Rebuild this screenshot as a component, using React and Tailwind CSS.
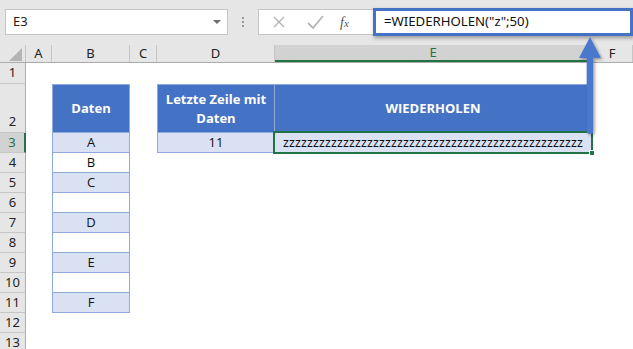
import React from 'react';

const cols = [
  { key: 'A', w: 'w-[26px]' },
  { key: 'B', w: 'w-[78px]' },
  { key: 'C', w: 'w-[27px]' },
  { key: 'D', w: 'w-[118px]' },
  { key: 'E', w: 'w-[317px]' },
  { key: 'F', w: 'flex-1' },
];

const daten = ['A', 'B', 'C', '', 'D', '', 'E', '', 'F'];

const rowHeights = {
  1: 'h-[21px]',
  2: 'h-[49px]',
};

const cellFont = { fontFamily: '"Open Sans", "Noto Sans", sans-serif' };
const uiFont = { fontFamily: '"Noto Sans", "Open Sans", sans-serif' };

const FormulaArrow = () => (
  <svg className="absolute left-[576px] top-[34px] pointer-events-none" width="32" height="108" viewBox="0 0 32 108">
    <defs>
      <filter id="sh" x="-50%" y="-20%" width="200%" height="140%">
        <feDropShadow dx="1.5" dy="1.5" stdDeviation="1.5" floodColor="#000" floodOpacity="0.35" />
      </filter>
    </defs>
    <g filter="url(#sh)">
      <path d="M14 3 L25 24 L17.3 24 L17.3 97 Q17.3 100 14 100 Q10.7 100 10.7 97 L10.7 24 L3 24 Z" fill="#4a78cc" />
    </g>
  </svg>
);

const Toolbar = () => (
  <div className="h-[45px] bg-[#e6e6e6] flex items-start pt-[9px] pl-[5px]" style={uiFont}>
    <div className="w-[223px] h-[26px] bg-white border border-[#c6c6c6] flex items-center justify-between pl-[7px] pr-[6px]">
      <span className="text-[13px] text-[#222]">E3</span>
      <span className="w-0 h-0 border-l-[4px] border-r-[4px] border-t-[4px] border-l-transparent border-r-transparent border-t-[#6d6d6d]" />
    </div>
    <div className="w-[30px] h-[26px] flex flex-col items-center justify-center gap-[2px]">
      <span className="w-[2px] h-[2px] bg-[#9a9a9a]" />
      <span className="w-[2px] h-[2px] bg-[#9a9a9a]" />
      <span className="w-[2px] h-[2px] bg-[#9a9a9a]" />
    </div>
    <div className="w-[115px] h-[26px] bg-white border border-[#c6c6c6] border-r-0 flex items-center">
      <svg width="36" height="26" viewBox="0 0 36 26" className="ml-[2px]">
        <path d="M13 8 L23 18 M23 8 L13 18" stroke="#b4b4b4" strokeWidth="1.4" fill="none" />
      </svg>
      <svg width="36" height="26" viewBox="0 0 36 26">
        <path d="M11 14 L16 19 L26 7" stroke="#b4b4b4" strokeWidth="1.8" fill="none" />
      </svg>
      <span className="ml-[7px] text-[14px] italic text-[#555]" style={{ fontFamily: '"Liberation Serif", serif' }}>
        f<span className="text-[11px]">x</span>
      </span>
    </div>
    <div className="w-[260px] h-[28px] -mt-px bg-white border-[3px] border-[#4472c4] shadow-[1px_2px_4px_rgba(0,0,0,0.35)] flex items-center pl-[8px]">
      <span className="text-[13.2px] text-[#111]">=WIEDERHOLEN("z";50)</span>
    </div>
  </div>
);

const ColumnHeaders = () => (
  <div className="flex h-[18px] bg-[#e6e6e6] border-b border-[#ababab]" style={uiFont}>
    <div className="w-[26px] relative border-r border-[#c6c6c6]">
      <svg className="absolute left-[9px] top-[3px]" width="14" height="14" viewBox="0 0 14 14">
        <path d="M13 0 L13 13 L0 13 Z" fill="#b4b4b4" />
      </svg>
    </div>
    {cols.map((c) =>
      c.key === 'E' ? (
        <div key={c.key} className={`${c.w} bg-[#d2d2d2] border-r border-[#c6c6c6] border-b-2 border-b-[#217346] flex items-center justify-center text-[13px] text-[#217346]`}>
          E
        </div>
      ) : (
        <div key={c.key} className={`${c.w} border-r border-[#c6c6c6] flex items-center justify-center text-[13px] text-[#222]`}>
          {c.key}
        </div>
      )
    )}
  </div>
);

const RowHeader = ({ n }) => (
  <div
    className={`w-[26px] shrink-0 flex items-center justify-center text-[13px] border-b border-[#c6c6c6] ${
      n === 3 ? 'bg-[#d2d2d2] text-[#217346] border-r-2 border-r-[#217346]' : 'bg-[#e6e6e6] text-[#222] border-r border-r-[#ababab]'
    }`}
    style={uiFont}
  >
    <span className={n === 2 ? 'self-end pb-[1px]' : ''}>{n}</span>
  </div>
);

const Row = ({ n }) => {
  const h = rowHeights[n] || 'h-[20px]';
  const idx = n - 3;
  let b = null;
  let d = null;
  let e = null;

  if (n === 2) {
    b = (
      <div className="w-[78px] bg-[#4472c4] border border-[#8ea9db] flex items-center justify-center text-white font-bold text-[13px]">
        Daten
      </div>
    );
    d = (
      <div className="w-[118px] bg-[#4472c4] border border-[#8ea9db] flex items-center justify-center text-center text-white font-bold text-[13px] leading-[19px]">
        Letzte Zeile mit
        <br />
        Daten
      </div>
    );
    e = (
      <div className="w-[317px] bg-[#4472c4] border-t border-r border-b border-[#8ea9db] flex items-center justify-center text-white font-bold text-[13px]">
        WIEDERHOLEN
      </div>
    );
  } else if (idx >= 0 && idx < daten.length) {
    const shaded = idx % 2 === 0;
    b = (
      <div className={`w-[78px] border-x border-b border-[#8ea9db] flex items-center justify-center text-[13px] text-[#111] ${shaded ? 'bg-[#d9e1f2]' : 'bg-white'}`}>
        {daten[idx]}
      </div>
    );
  }

  if (n === 3) {
    d = (
      <div className="w-[118px] bg-[#d9e1f2] border-x border-b border-[#8ea9db] flex items-center justify-center text-[13px] text-[#111]">
        11
      </div>
    );
    e = (
      <div className="w-[317px] relative bg-[#d9e1f2] border-r border-b border-[#8ea9db] flex items-center pl-[8px] text-[12px] text-[#111]" style={{ fontFamily: '"Liberation Sans", sans-serif' }}>
        {'z'.repeat(50)}
        <span className="absolute -left-[2px] -top-[2px] -right-[2px] -bottom-[2px] border-2 border-[#217346]" />
        <span className="absolute -right-[4px] -bottom-[4px] w-[6px] h-[6px] bg-[#217346] border border-white" />
      </div>
    );
  }

  return (
    <div className={`flex ${h}`} style={cellFont}>
      <RowHeader n={n} />
      <div className="w-[26px]" />
      {b || <div className="w-[78px]" />}
      <div className="w-[27px]" />
      {d || <div className="w-[118px]" />}
      {e || <div className="w-[317px]" />}
      <div className="flex-1" />
    </div>
  );
};

export default function App() {
  const rows = Array.from({ length: 13 }, (_, i) => i + 1);
  return (
    <div className="relative w-[633px] h-[349px] overflow-hidden bg-white">
      <Toolbar />
      <ColumnHeaders />
      {rows.map((n) => (
        <Row key={n} n={n} />
      ))}
      <FormulaArrow />
    </div>
  );
}
